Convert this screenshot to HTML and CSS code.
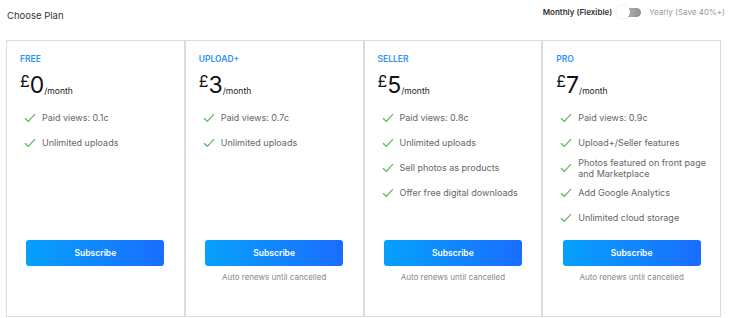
FILE: index.html
```html
<!DOCTYPE html>
<html lang="en">
<head>
<meta charset="utf-8">
<title>Choose Plan</title>
<link rel="stylesheet" href="styles.css">
</head>
<body>
<div class="page">
  <header class="header">
    <h1 class="title">Choose Plan</h1>
    <div class="billing">
      <span class="billing-opt active">Monthly (Flexible)</span>
      <span class="toggle"><span class="toggle-knob"></span></span>
      <span class="billing-opt">Yearly (Save 40%+)</span>
    </div>
  </header>
  <section class="plans">
    <div class="plan">
      <div class="plan-name">FREE</div>
      <div class="price"><span class="cur">£</span><span class="amt">0</span><span class="per">/month</span></div>
      <ul class="features">
        <li><svg class="check" viewBox="0 0 12 10"><path d="M1 5.2 L4.3 8.3 L11 1.2"/></svg><span>Paid views: 0.1c</span></li>
        <li><svg class="check" viewBox="0 0 12 10"><path d="M1 5.2 L4.3 8.3 L11 1.2"/></svg><span>Unlimited uploads</span></li>
      </ul>
      <div class="plan-foot">
        <button class="subscribe">Subscribe</button>
      </div>
    </div>
    <div class="plan">
      <div class="plan-name">UPLOAD+</div>
      <div class="price"><span class="cur">£</span><span class="amt">3</span><span class="per">/month</span></div>
      <ul class="features">
        <li><svg class="check" viewBox="0 0 12 10"><path d="M1 5.2 L4.3 8.3 L11 1.2"/></svg><span>Paid views: 0.7c</span></li>
        <li><svg class="check" viewBox="0 0 12 10"><path d="M1 5.2 L4.3 8.3 L11 1.2"/></svg><span>Unlimited uploads</span></li>
      </ul>
      <div class="plan-foot">
        <button class="subscribe">Subscribe</button>
        <p class="renew">Auto renews until cancelled</p>
      </div>
    </div>
    <div class="plan">
      <div class="plan-name">SELLER</div>
      <div class="price"><span class="cur">£</span><span class="amt">5</span><span class="per">/month</span></div>
      <ul class="features">
        <li><svg class="check" viewBox="0 0 12 10"><path d="M1 5.2 L4.3 8.3 L11 1.2"/></svg><span>Paid views: 0.8c</span></li>
        <li><svg class="check" viewBox="0 0 12 10"><path d="M1 5.2 L4.3 8.3 L11 1.2"/></svg><span>Unlimited uploads</span></li>
        <li><svg class="check" viewBox="0 0 12 10"><path d="M1 5.2 L4.3 8.3 L11 1.2"/></svg><span>Sell photos as products</span></li>
        <li><svg class="check" viewBox="0 0 12 10"><path d="M1 5.2 L4.3 8.3 L11 1.2"/></svg><span>Offer free digital downloads</span></li>
      </ul>
      <div class="plan-foot">
        <button class="subscribe">Subscribe</button>
        <p class="renew">Auto renews until cancelled</p>
      </div>
    </div>
    <div class="plan">
      <div class="plan-name">PRO</div>
      <div class="price"><span class="cur">£</span><span class="amt">7</span><span class="per">/month</span></div>
      <ul class="features">
        <li><svg class="check" viewBox="0 0 12 10"><path d="M1 5.2 L4.3 8.3 L11 1.2"/></svg><span>Paid views: 0.9c</span></li>
        <li><svg class="check" viewBox="0 0 12 10"><path d="M1 5.2 L4.3 8.3 L11 1.2"/></svg><span>Upload+/Seller features</span></li>
        <li><svg class="check" viewBox="0 0 12 10"><path d="M1 5.2 L4.3 8.3 L11 1.2"/></svg><span>Photos featured on front page and Marketplace</span></li>
        <li><svg class="check" viewBox="0 0 12 10"><path d="M1 5.2 L4.3 8.3 L11 1.2"/></svg><span>Add Google Analytics</span></li>
        <li><svg class="check" viewBox="0 0 12 10"><path d="M1 5.2 L4.3 8.3 L11 1.2"/></svg><span>Unlimited cloud storage</span></li>
      </ul>
      <div class="plan-foot">
        <button class="subscribe">Subscribe</button>
        <p class="renew">Auto renews until cancelled</p>
      </div>
    </div>
  </section>
</div>
</body>
</html>
```
FILE: styles.css
```css
* { box-sizing: border-box; }
html, body { margin: 0; padding: 0; background: #fff; }
body {
  font-family: Inter, "Noto Sans", "Liberation Sans", sans-serif;
  color: #333;
}
.page {
  padding: 0 8px 0 6px;
}
.header {
  height: 40px;
  display: flex;
  justify-content: space-between;
  align-items: flex-start;
  margin-right: -4px;
}
.title {
  margin: 10px 0 0 1px;
  font-size: 9.5px;
  font-weight: 400;
  line-height: 12px;
  color: #333;
}
.billing {
  display: flex;
  align-items: center;
  margin-top: 6px;
}
.billing-opt {
  font-size: 8px;
  line-height: 12px;
  color: #999;
  white-space: nowrap;
}
.billing-opt.active {
  color: #333;
  font-weight: 600;
}
.toggle {
  position: relative;
  width: 22px;
  height: 9px;
  margin: 0 8px 0 7px;
  border-radius: 5px;
  background: linear-gradient(90deg, #c4c4c4, #8e8e8e);
}
.toggle-knob {
  position: absolute;
  left: -3px;
  top: -2.5px;
  width: 14px;
  height: 14px;
  border-radius: 50%;
  background: #fff;
  box-shadow: 0 0 2px rgba(0,0,0,0.15);
}
.plans {
  display: grid;
  grid-template-columns: repeat(4, 1fr);
  height: 277px;
}
.plan {
  border: 1px solid #d9dce1;
  display: flex;
  flex-direction: column;
  padding: 12px 12px 0 13px;
  min-width: 0;
}
.plan-name {
  font-size: 8.5px;
  font-weight: 600;
  line-height: 12px;
  color: #2f93f5;
}
.price {
  display: flex;
  align-items: flex-start;
  margin-top: 7px;
  height: 28px;
  color: #111;
}
.cur {
  font-size: 16px;
  line-height: 16px;
  margin-top: 1px;
}
.amt {
  font-size: 23px;
  line-height: 26px;
}
.per {
  font-size: 8.5px;
  align-self: flex-end;
  line-height: 12px;
  margin-bottom: 3px;
  color: #222;
}
.features {
  list-style: none;
  margin: 5px 0 0 0;
  padding: 0 0 0 4px;
}
.features li {
  display: flex;
  align-items: center;
  min-height: 25px;
  font-size: 9px;
  line-height: 11px;
  color: #666;
}
.check {
  flex: none;
  width: 12px;
  height: 10px;
  margin-right: 6px;
  fill: none;
  stroke: #5cb85c;
  stroke-width: 1.2;
}
.plan-foot {
  margin-top: auto;
  height: 76px;
  display: flex;
  flex-direction: column;
  align-items: center;
  margin-left: -13px;
  margin-right: -12px;
}
.subscribe {
  width: 138px;
  height: 26px;
  border: 0;
  border-radius: 3px;
  background: linear-gradient(90deg, #06a1fc 0%, #1a6dff 100%);
  color: #fff;
  font-family: inherit;
  font-size: 8.5px;
  font-weight: 600;
  cursor: pointer;
}
.renew {
  margin: 5px 0 0;
  font-size: 8px;
  line-height: 12px;
  color: #888;
}
```
